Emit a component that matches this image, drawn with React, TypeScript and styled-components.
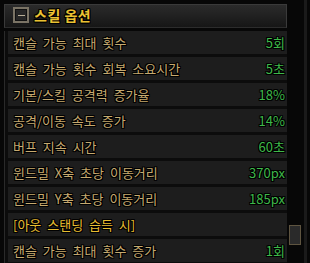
import React from 'react';
import styled, { createGlobalStyle } from 'styled-components';

const GlobalStyle = createGlobalStyle`
  html, body {
    margin: 0;
    padding: 0;
    background: #070707;
  }
  body {
    font-family: 'Noto Sans CJK KR', 'Noto Sans', sans-serif;
  }
`;

type Option = {
  label: string;
  value?: string;
  section?: boolean;
};

const options: Option[] = [
  { label: '캔슬 가능 최대 횟수', value: '5회' },
  { label: '캔슬 가능 횟수 회복 소요시간', value: '5초' },
  { label: '기본/스킬 공격력 증가율', value: '18%' },
  { label: '공격/이동 속도 증가', value: '14%' },
  { label: '버프 지속 시간', value: '60초' },
  { label: '윈드밀 X축 초당 이동거리', value: '370px' },
  { label: '윈드밀 Y축 초당 이동거리', value: '185px' },
  { label: '[아웃 스탠딩 습득 시]', section: true },
  { label: '캔슬 가능 최대 횟수 증가', value: '1회' },
  { label: '', value: '' },
];

const App = () => {
  return (
    <>
      <GlobalStyle />
      <Panel>
        <Content>
          <Header>
            <Toggle>
              <span />
            </Toggle>
            <Title>스킬 옵션</Title>
          </Header>
          <List>
            {options.map((o, i) => (
              <Row key={i}>
                <Label $section={o.section}>{o.label}</Label>
                {o.value && <Value>{o.value}</Value>}
              </Row>
            ))}
          </List>
        </Content>
        <Scroll>
          <Thumb />
        </Scroll>
      </Panel>
    </>
  );
};

export default App;

const outline = `
  text-shadow:
    1px 0 0 #000, -1px 0 0 #000, 0 1px 0 #000, 0 -1px 0 #000,
    1px 1px 0 #000, -1px -1px 0 #000, 1px -1px 0 #000, -1px 1px 0 #000;
`;

const Panel = styled.div`
  width: 310px;
  height: 263px;
  overflow: hidden;
  display: flex;
  background: #070707;
  padding: 4px 0 0 4px;
  box-sizing: border-box;
`;

const Content = styled.div`
  width: 285px;
  display: flex;
  flex-direction: column;
  gap: 3px;
`;

const Header = styled.div`
  height: 26px;
  box-sizing: border-box;
  display: flex;
  align-items: center;
  gap: 5px;
  padding: 0 0 2px 8px;
  border: 1px solid #3a3a3a;
  border-bottom-color: #2c2c2c;
  background: linear-gradient(#2b2b2b, #161616);
`;

const Toggle = styled.div`
  width: 16px;
  height: 16px;
  box-sizing: border-box;
  border: 2px solid #7a7365;
  background: #262626;
  display: flex;
  align-items: center;
  justify-content: center;
  box-shadow: inset 0 0 0 1px #111;
  span {
    width: 7px;
    height: 1px;
    background: #b8ad96;
  }
`;

const Title = styled.div`
  color: #ebc232;
  font-size: 14px;
  font-weight: 700;
  letter-spacing: 0.5px;
  ${outline}
`;

const List = styled.div`
  display: flex;
  flex-direction: column;
  gap: 3px;
  border-left: 1px solid #2a2a2a;
  padding-left: 3px;
  background: #0c0c0c;
`;

const Row = styled.div`
  height: 22px;
  display: flex;
  align-items: center;
  justify-content: space-between;
  padding: 0 2px 1px 5px;
  background: #1d1d1d;
`;

const Label = styled.span<{ $section?: boolean }>`
  color: ${(p) => (p.$section ? '#e8bd32' : '#c6aa70')};
  font-size: 13px;
  word-spacing: 3px;
  ${outline}
`;

const Value = styled.span`
  color: #3fb84a;
  font-size: 13px;
  ${outline}
`;

const Scroll = styled.div`
  flex: 1;
  margin-top: -4px;
  border-right: 3px solid #1a1a1a;
  margin-right: 3px;
  padding: 225px 3px 0 2px;
`;

const Thumb = styled.div`
  width: 12px;
  height: 20px;
  box-sizing: border-box;
  border: 1px solid #5e5440;
  background: #2a2a2a;
`;
